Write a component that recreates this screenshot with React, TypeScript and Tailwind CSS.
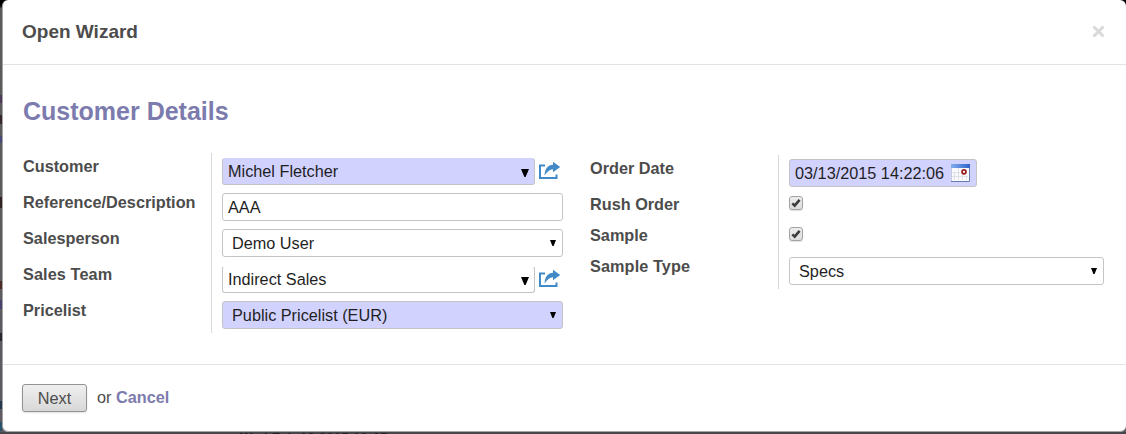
import type { ReactNode } from 'react';

const fieldBase = 'flex items-center border border-[#c4c4c4] rounded-[3px] text-[#1f1f1f]';

function Label({ children, className = '' }: { children: ReactNode; className?: string }) {
  return <div className={`font-bold leading-5 text-[#4c4c4c] whitespace-nowrap ${className}`}>{children}</div>;
}

function Arrow({ large = false }: { large?: boolean }) {
  return large ? (
    <svg className="ml-auto mr-[5px] mt-[2px] shrink-0" width="8" height="8" viewBox="0 0 8 8">
      <path d="M0 0H8L4.6 8H3.4Z" fill="#000" />
    </svg>
  ) : (
    <svg className="ml-auto mr-[6px] shrink-0" width="6" height="6" viewBox="0 0 6 6">
      <path d="M0 0H6L3.6 6H2.4Z" fill="#000" />
    </svg>
  );
}

function Select({ value, required = false }: { value: string; required?: boolean }) {
  return (
    <div className={`${fieldBase} h-7 w-full pl-[9px] ${required ? 'bg-[#d2d2ff]' : 'bg-white'}`}>
      <span>{value}</span>
      <Arrow />
    </div>
  );
}

function Many2One({ value, required = false }: { value: string; required?: boolean }) {
  return (
    <div className="flex h-7 w-full">
      <div className={`${fieldBase} mt-px h-[27px] w-[313px] pl-[5px] ${required ? 'border-t-[#d2d2ff] bg-[#d2d2ff]' : 'border-t-transparent bg-white'}`}>
        <span className="pb-px">{value}</span>
        <Arrow large />
      </div>
      <svg className="ml-1 mt-[4px]" width="22" height="19" viewBox="0 0 22 19">
        <path d="M6 4.500H1V17H17.500V13.500" fill="none" stroke="#4189c7" strokeWidth="2" />
        <path d="M5.500 14.500C6 7.500 9 4 14 3.800V.8L21.200 6L14 11.200V8.300C10.500 8.600 8.500 10.500 5.500 14.500Z" fill="#4189c7" />
      </svg>
    </div>
  );
}

function Check() {
  return (
    <div className="flex h-[14px] w-[14px] items-center justify-center rounded-[3px] border border-[#a3a3a3] bg-linear-to-b from-[#ededed] to-[#dcdcdc] shadow-[0_1px_1px_rgba(0,0,0,0.12)]">
      <svg width="10" height="10" viewBox="0 0 10 10">
        <path d="M1.300 5.400L3.700 7.700L8.600 1.800" fill="none" stroke="#3c3c3c" strokeWidth="2.600" />
      </svg>
    </div>
  );
}

function CalendarIcon() {
  return (
    <svg className="ml-[7px]" width="19" height="18" viewBox="0 0 19 18">
      <defs>
        <linearGradient id="cal" x1="0" x2="1" y1="0" y2="0">
          <stop stopColor="#80aeef" />
          <stop offset="1" stopColor="#2c61c9" />
        </linearGradient>
      </defs>
      <path d="M0 0H19V18H0Z" fill="#f9f9fc" />
      <path d="M0 0H19V4H0Z" fill="url(#cal)" />
      <path d="M3.500 8V16M7.500 4V16M11.500 9V16M15.500 11V16M1 8.500H9M1 12.500H17" stroke="#dfe1e8" />
      <path d="M.5 4V17" stroke="#c5cbdc" />
      <path d="M0 17.500H18.500V4" fill="none" stroke="#667baf" />
      <circle cx="13" cy="7.800" r="2" fill="#fff" stroke="#9c1e24" strokeWidth="1.700" />
    </svg>
  );
}

export default function App() {
  return (
    <div className="h-[434px] w-[1126px] overflow-hidden bg-[#47464a] font-['Liberation_Sans',Arial,sans-serif] text-[16.25px] leading-6">
      <div className="flex h-[432px] bg-linear-to-b from-black from-[1%] via-[#5b5b5b] via-[2%] to-[#5d5b61]">
        <div className="flex w-[2px] shrink-0 flex-col">
          <div className="mt-[95px] h-[8px] bg-[#4c3a58]" />
          <div className="mt-[12px] h-[9px] bg-[#35282b]" />
          <div className="mt-[12px] h-[7px] bg-[#4a4a76]" />
          <div className="mt-[54px] h-[11px] bg-[#2f2422]" />
          <div className="mt-[73px] h-[8px] bg-[#4c2d24]" />
          <div className="mt-[11px] h-[9px] bg-[#45436d]" />
          <div className="mt-[24px] h-[8px] bg-[#29262b]" />
          <div className="mt-[60px] h-[8px] bg-[#24394d]" />
          <div className="mt-[13px] h-[9px] bg-[#28536b]" />
        </div>
        <div className="flex min-w-0 grow flex-col rounded-[6px] border-b border-l border-[#a5a5a5] bg-white">
          <header className="flex h-[65px] shrink-0 items-center justify-between border-b border-[#e2e2e2] pl-[19px] pr-[21px]">
            <h1 className="text-[19px] font-bold text-[#4c4c4c]">Open Wizard</h1>
            <svg className="mb-[2px]" width="13" height="13" viewBox="0 0 13 13">
              <path d="M1.500 1.500L11.500 11.500M11.500 1.500L1.500 11.500" stroke="#d9d9d9" strokeWidth="3" />
            </svg>
          </header>
          <main className="h-[299px] shrink-0 pl-[20px] pt-[30px]">
            <h2 className="h-[58px] text-[25px] font-bold leading-[32px] text-[#7c7bad]">Customer Details</h2>
            <div className="flex items-start">
              <div className="flex h-[180px] w-[189px] flex-col gap-4 border-r border-[#d9d9d9] pt-[3px]">
                <Label>Customer</Label>
                <Label>Reference/Description</Label>
                <Label>Salesperson</Label>
                <Label className="tracking-[0.1px]">Sales Team</Label>
                <Label>Pricelist</Label>
              </div>
              <div className="ml-[10px] mt-[4px] flex w-[341px] flex-col gap-2">
                <Many2One value="Michel Fletcher" required />
                <div className={`${fieldBase} h-7 w-full bg-white pl-[5px]`}>
                  <span>AAA</span>
                </div>
                <Select value="Demo User" />
                <Many2One value="Indirect Sales" />
                <Select value="Public Pricelist (EUR)" required />
              </div>
              <div className="ml-[27px] mt-[2px] flex h-[134px] w-[189px] flex-col border-r border-[#d9d9d9] pt-[3px]">
                <Label className="h-9">Order Date</Label>
                <Label className="h-[31px]">Rush Order</Label>
                <Label className="h-[31px]">Sample</Label>
                <Label className="tracking-[0.1px]">Sample Type</Label>
              </div>
              <div className="ml-[10px] mt-[6px] flex w-[315px] flex-col">
                <div className={`${fieldBase} mb-[9px] h-7 w-[188px] bg-[#d2d2ff] pl-[5px]`}>
                  <span>03/13/2015 14:22:06</span>
                  <CalendarIcon />
                </div>
                <Check />
                <div className="mb-[16px] mt-[17px]">
                  <Check />
                </div>
                <Select value="Specs" />
              </div>
            </div>
          </main>
          <footer className="flex grow items-start border-t border-[#e2e2e2] pl-[19px] pt-[19px] text-[#4c4c4c]">
            <button className="h-7 w-[65px] rounded-[3px] border border-[#929292] bg-linear-to-b from-[#efefef] to-[#d8d8d8] text-[#4c4c4c] shadow-[0_1px_2px_rgba(0,0,0,0.12)]">Next</button>
            <span className="ml-[10px] mt-[3px] leading-5">
              or <a className="font-bold text-[#7c7bad]">Cancel</a>
            </span>
          </footer>
        </div>
      </div>
      <div className="flex h-[2px] overflow-hidden pl-[240px] text-[13px] font-bold leading-[12px] text-[#202024]">
        <span className="tracking-[0.3px]">Wed Feb 18 2015 10:15</span>
      </div>
    </div>
  );
}
